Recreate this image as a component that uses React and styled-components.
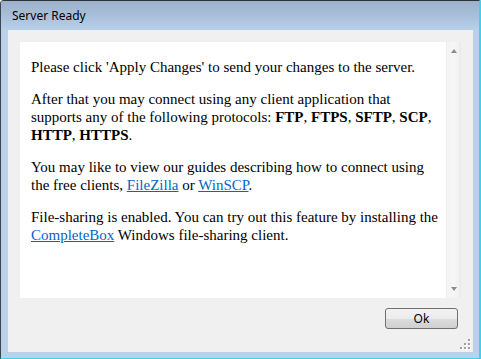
import React from 'react'
import styled, { createGlobalStyle } from 'styled-components'

const GlobalStyle = createGlobalStyle`
  html, body {
    margin: 0;
    padding: 0;
    background: #ffffff;
  }
`;

const Window = styled.div`
  box-sizing: border-box;
  width: 481px;
  height: 359px;
  display: flex;
  flex-direction: column;
  background: #b9d1ea;
  border-top: 1px solid #2e3338;
  border-left: 1px solid #3c4650;
  border-right: 2px solid #3fd0ee;
  border-bottom: 1px solid #3fd0ee;
  border-top-left-radius: 4px;
  overflow: hidden;
`;

const TitleBar = styled.div`
  flex: 0 0 29px;
  display: flex;
  align-items: center;
  padding-left: 11px;
  background: linear-gradient(to bottom, #9cb1ca 0%, #a9bfd9 50%, #b9d0ea 100%);
  font-family: "Noto Sans", "Open Sans", sans-serif;
  font-size: 12px;
  color: #000000;
`;

const Client = styled.div`
  flex: 1 1 auto;
  display: flex;
  flex-direction: column;
  position: relative;
  margin: 0 6px 6px 7px;
  padding: 12px 12px 23px 12px;
  background: #f0f0f0;
  box-sizing: border-box;
`;

const Panel = styled.div`
  flex: 0 0 256px;
  display: flex;
  background: #ffffff;
`;

const Content = styled.div`
  flex: 1 1 auto;
  padding: 16px 0 0 11px;
  font-family: "Liberation Serif", "Times New Roman", serif;
  font-size: 15px;
  line-height: 18px;
  color: #000000;
  white-space: nowrap;
`;

const Paragraph = styled.p`
  margin: 0 0 14px 0;
`;

const Link = styled.a`
  color: #0066cc;
  text-decoration: underline;
`;

const ScrollBar = styled.div`
  flex: 0 0 15px;
  display: flex;
  flex-direction: column;
  justify-content: space-between;
  align-items: center;
  box-sizing: border-box;
  padding: 7px 0 7px 1px;
  background: linear-gradient(to right, #e8e8e8 0px, #f3f3f3 1px, #f6f6f6 8px, #eeeeee 14px, #e4e4e4 15px);
`;

const Arrow = styled.div`
  width: 0;
  height: 0;
  border-left: 3.5px solid transparent;
  border-right: 3.5px solid transparent;
  ${p => p.$down
    ? 'border-top: 4px solid #8c8c8c;'
    : 'border-bottom: 4px solid #8c8c8c;'}
`;

const Footer = styled.div`
  display: flex;
  justify-content: flex-end;
  padding: 10px 3px 0 0;
`;

const Button = styled.button`
  width: 73px;
  height: 21px;
  box-sizing: border-box;
  border: 1px solid #707070;
  border-radius: 3px;
  background: linear-gradient(to bottom, #f2f2f2 0%, #ebebeb 50%, #dddddd 51%, #cfcfcf 100%);
  font-family: "Noto Sans", "Open Sans", sans-serif;
  font-size: 12px;
  color: #000000;
  padding: 0;
`;

const Grip = styled.svg`
  position: absolute;
  right: 2px;
  bottom: 2px;
`;

const gripDots = [[8, 0], [4, 4], [8, 4], [0, 8], [4, 8], [8, 8]];

export default function App() {
  return (
    <>
      <GlobalStyle />
      <Window>
        <TitleBar>Server Ready</TitleBar>
        <Client>
          <Panel>
            <Content>
              <Paragraph>Please click 'Apply Changes' to send your changes to the server.</Paragraph>
              <Paragraph>
                After that you may connect using any client application that<br />
                supports any of the following protocols: <b>FTP</b>, <b>FTPS</b>, <b>SFTP</b>, <b>SCP</b>,<br />
                <b>HTTP</b>, <b>HTTPS</b>.
              </Paragraph>
              <Paragraph>
                You may like to view our guides describing how to connect using<br />
                the free clients, <Link href="#">FileZilla</Link> or <Link href="#">WinSCP</Link>.
              </Paragraph>
              <Paragraph>
                File-sharing is enabled. You can try out this feature by installing the<br />
                <Link href="#">CompleteBox</Link> Windows file-sharing client.
              </Paragraph>
            </Content>
            <ScrollBar>
              <Arrow />
              <Arrow $down />
            </ScrollBar>
          </Panel>
          <Footer>
            <Button>Ok</Button>
          </Footer>
          <Grip width="11" height="11" viewBox="0 0 11 11">
            {gripDots.map(([x, y], i) => (
              <g key={i}>
                <rect x={x + 1} y={y + 1} width="2" height="2" fill="#ffffff" />
                <rect x={x} y={y} width="2" height="2" fill="#a0a0a0" />
              </g>
            ))}
          </Grip>
        </Client>
      </Window>
    </>
  )
}
